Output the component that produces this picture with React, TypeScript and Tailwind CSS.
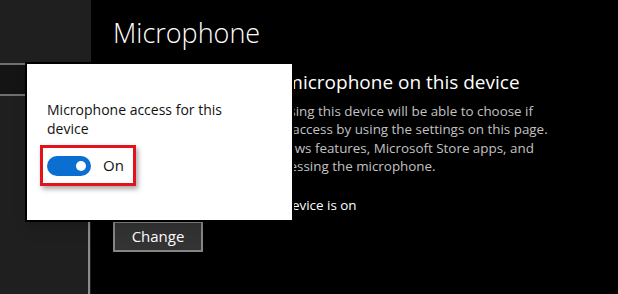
import React from "react";

const font = { fontFamily: '"Segoe UI", "Open Sans", "Noto Sans", sans-serif' };

const Sidebar: React.FC = () => {
  return (
    <div className="flex h-full w-[91px] shrink-0 flex-col bg-[#1f1f1f]">
      <div className="h-[63px]" />
      <div className="h-[2px] bg-[#6f6f6f]" />
      <div className="h-[29px] bg-[#141414]" />
      <div className="h-[2px] bg-[#6f6f6f]" />
      <div className="flex flex-1 justify-end pr-[1px] pt-[6px]">
        <div className="w-[2px] bg-[#8a8a8a]" />
      </div>
    </div>
  );
};

const AccessPopup: React.FC = () => {
  return (
    <div className="absolute left-[25px] top-[62px] h-[160px] w-[269px] border-2 border-black bg-white shadow-lg">
      <div className="pl-[20px] pt-[36px] text-[14px] leading-[19px] text-[#111]">
        <p className="w-[190px]">Microphone access for this device</p>
      </div>
      {/* highlighted toggle */}
      <div className="ml-[13px] mt-[7px] flex h-[41px] w-[96px] items-center border-[3px] border-[#e3121b] shadow-[2px_3px_5px_rgba(0,0,0,0.35)]">
        <div className="ml-[4px] flex h-[20px] w-[44px] items-center justify-end rounded-full bg-[#0a6fd0] pr-[5px]">
          <div className="h-[10px] w-[10px] rounded-full bg-white" />
        </div>
        <span className="ml-[12px] text-[15px] text-[#111]">On</span>
      </div>
    </div>
  );
};

export default function App() {
  return (
    <div className="relative flex h-[294px] w-[618px] overflow-hidden bg-black" style={font}>
      <Sidebar />
      <div className="flex-1 pl-[22px] text-white">
        <h1 className="pt-[13px] text-[27px] font-light leading-[40px]">Microphone</h1>
        <h2 className="mt-[15px] whitespace-nowrap text-[19px] leading-[28px]">
          Allow access to the microphone on this device
        </h2>
        <div className="mt-[6px] whitespace-nowrap text-[13.4px] leading-[18.4px] text-[#c2c2c2]">
          <p>If you allow access, people using this device will be able to choose if</p>
          <p>their apps have microphone access by using the settings on this page.</p>
          <p>Denying access blocks Windows features, Microsoft Store apps, and</p>
          <p>most desktop apps from accessing the microphone.</p>
        </div>
        <p className="mt-[20px] whitespace-nowrap text-[13.4px] leading-[19px]">
          Microphone access for this device is on
        </p>
        <button className="mt-[6px] h-[31px] w-[90px] border-2 border-[#858585] bg-[#333333] text-[15px] text-white">
          Change
        </button>
      </div>
      <AccessPopup />
    </div>
  );
}
